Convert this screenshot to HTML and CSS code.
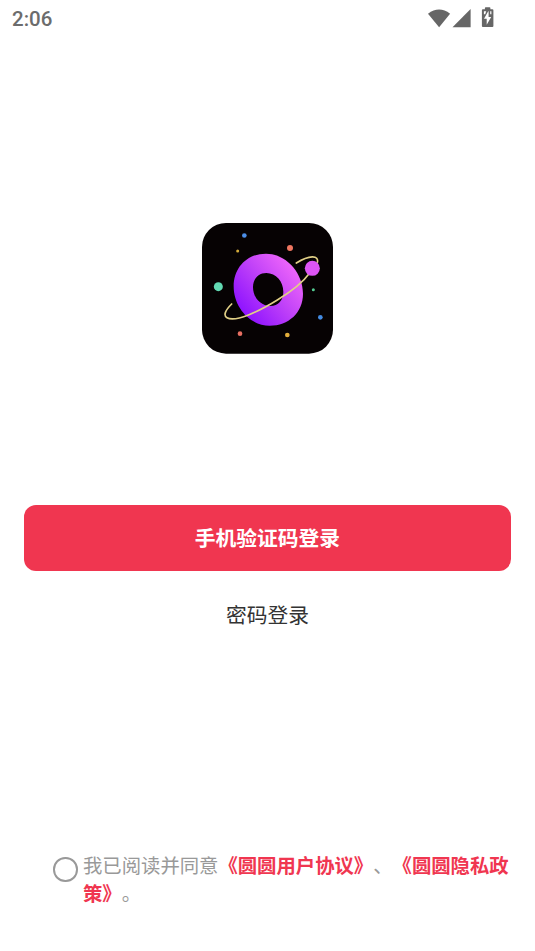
FILE: index.html
```html
<!DOCTYPE html>
<html lang="zh-CN">
<head>
<meta charset="utf-8">
<title>登录</title>
<link rel="stylesheet" href="styles.css">
</head>
<body>
<header class="status">
  <span class="time">2:06</span>
  <svg class="status-icons" viewBox="0 0 72 24" aria-hidden="true">
    <path d="M1 11.7Q12.1 3.5 23.1 11.7L12.1 25.2Z"/>
    <path d="M25.500 25.300L43.600 7V25.300Z"/>
    <path transform="translate(.4 0)" fill-rule="evenodd" d="M55.500 7.300h2V6q0-.8.8-.8h3.900q.8 0 .8.800v1.300h2q1 0 1 1v15.700q0 1-1 1h-9.500q-1 0-1-1V8.300q0-1 1-1ZM60.800 9.200L56.600 16.800h2.700v6L63.800 15h-2.600V9.200ZM56.500 9.200v3h1.300l1-3ZM62.800 9.200v3h1.200v-3Z"/>
  </svg>
</header>
<main class="login">
  <svg class="logo" viewBox="21 24 393 393" aria-hidden="true">
    <defs>
      <linearGradient id="ring" x1="0.1" y1="0.8" x2="0.85" y2="0.15">
        <stop offset="0" stop-color="#8d12ff"/>
        <stop offset=".5" stop-color="#bd3ff8"/>
        <stop offset="1" stop-color="#ee66fa"/>
      </linearGradient>
    </defs>
    <rect x="21" y="24" width="393" height="392" rx="72" fill="#060203"/>
    <path fill="url(#ring)" fill-rule="evenodd" d="M213 116C271 116 324 171 324 236C324 293 280 332 224 332C164 332 116 277 116 214C116 157 157 116 213 116ZM214 174C190 174 174 192 174 217C174 247 196 273 226 273C250 273 265 256 265 231C265 199 243 174 214 174Z"/>
    <path d="M110 267C91 286 84 301 96 308C121 323 192 289 247 255C292 228 324 202 346 172M304 144C342 120 373 119 367 143" fill="none" stroke="#e0cf86" stroke-width="5" stroke-linecap="round"/>
    <circle cx="352" cy="160" r="22.500" fill="#dd55f5"/>
    <circle cx="148" cy="61.500" r="7" fill="#4c8fe8"/>
    <circle cx="128" cy="108" r="4.500" fill="#d3ab3b"/>
    <circle cx="285" cy="99" r="9" fill="#ef7660"/>
    <circle cx="70" cy="215" r="13.500" fill="#62d9b3"/>
    <circle cx="355" cy="224" r="4.500" fill="#53ca91"/>
    <circle cx="376" cy="307" r="7" fill="#438be2"/>
    <circle cx="135" cy="356" r="7" fill="#e86f62"/>
    <circle cx="277" cy="360" r="7" fill="#e3ae3b"/>
  </svg>
  <button class="primary">手机验证码登录</button>
  <a class="secondary">密码登录</a>
</main>
<footer class="agreement">
  <span class="check"></span>
  <p class="terms">我已阅读并同意<b>《圆圆用户协议》</b>、<b>《圆圆隐私政策》</b>。</p>
</footer>
</body>
</html>
```
FILE: styles.css
```css
* { box-sizing: border-box; }
body {
  margin: 0;
  height: 951px;
  display: flex;
  flex-direction: column;
  overflow: hidden;
  background: #fff;
  font-family: "Noto Sans CJK SC", sans-serif;
  text-spacing-trim: space-all;
}
.status {
  height: 38px;
  padding: 0 36px 0 12px;
  display: flex;
  justify-content: space-between;
  align-items: flex-start;
}
.time {
  font: 500 20.5px/38px Roboto, sans-serif;
  color: #6c6c6c;
}
.status-icons {
  width: 72px;
  height: 24px;
  margin-top: 2px;
  overflow: visible;
  fill: #666;
}
.login {
  display: flex;
  flex-direction: column;
  align-items: center;
  padding: 185px 24px 0;
}
.logo { width: 131px; height: 131px; }
.primary {
  width: 487px;
  height: 65.500px;
  margin-top: 151px;
  padding: 0 0 1.500px;
  border: 0;
  border-radius: 12px;
  background: #f03650;
  color: #fff;
  font: 700 20.75px/64px "Noto Sans CJK SC", sans-serif;
}
.secondary {
  margin-top: 28.500px;
  font-size: 20.75px;
  line-height: 30px;
  color: #333;
}
.agreement {
  display: flex;
  align-items: flex-start;
  margin-top: auto;
  padding: 0 20px 44px 53px;
}
.check {
  flex: none;
  width: 24.500px;
  height: 24.500px;
  margin: 6px 5.500px 0 0;
  border: 2px solid #999;
  border-radius: 50%;
}
.terms {
  margin: 0;
  font-size: 19.35px;
  line-height: 28px;
  color: #999;
}
.terms b { color: #f03650; font-weight: 700; }
```
